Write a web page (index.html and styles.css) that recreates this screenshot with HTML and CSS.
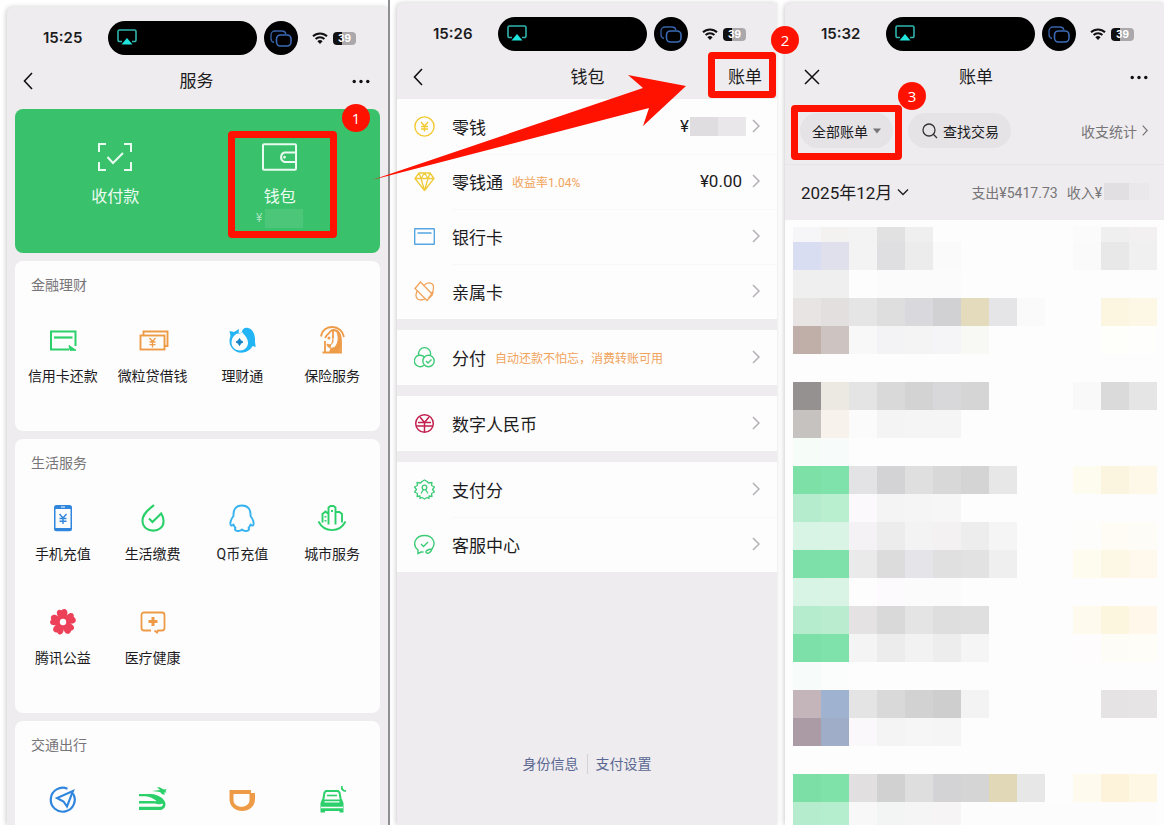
FILE: index.html
```html
<!DOCTYPE html>
<html lang="zh-CN">
<head>
<meta charset="utf-8">
<meta name="viewport" content="width=device-width, initial-scale=1">
<title>微信账单查看步骤</title>
<link rel="stylesheet" href="styles.css">
</head>
<body>
<svg class="defs" aria-hidden="true">
  <symbol id="airplay" viewBox="0 0 20 17"><path d="M5 12.500H2.500a1.500 1.500 0 0 1-1.500-1.500V2.500A1.500 1.500 0 0 1 2.500 1h15A1.500 1.500 0 0 1 19 2.500V11a1.500 1.500 0 0 1-1.500 1.500H15" fill="none" stroke="#2fb5ac" stroke-width="1.600"/><path d="M10 9l5.500 6.500h-11z" fill="#1fe5dc"/></symbol>
  <symbol id="screens" viewBox="0 0 22 17"><path d="M4 12.500C2 12 1 10.500 1 8.500V5a4 4 0 0 1 4-4h7c2 0 3.500 1 4 3" fill="none" stroke="#3663a8" stroke-width="1.300"/><rect x="6.500" y="5" width="14.500" height="11" rx="4" fill="none" stroke="#3b6cb8" stroke-width="1.600"/></symbol>
  <symbol id="wifi" viewBox="0 0 16 12"><path d="M1 4.300a10 10 0 0 1 14 0M3.600 7a6.300 6.300 0 0 1 8.800 0" fill="none" stroke="#111" stroke-width="2"/><path d="M8 12L5.400 9.200a3.700 3.700 0 0 1 5.200 0z" fill="#111"/></symbol>
  <symbol id="back" viewBox="0 0 10 18"><path d="M9 1L1.500 9 9 17" fill="none" stroke="#111" stroke-width="1.600"/></symbol>
  <symbol id="more" viewBox="0 0 18 5"><g fill="#111"><circle cx="2.200" cy="2.500" r="1.700"/><circle cx="9" cy="2.500" r="1.700"/><circle cx="15.800" cy="2.500" r="1.700"/></g></symbol>
  <symbol id="next" viewBox="0 0 8 14"><path d="M1 1l6 6-6 6" fill="none" stroke="#b2b0b3" stroke-width="1.500"/></symbol>
</svg>

<main class="board">
  <section class="shot shot-services">
    <div class="phone">
      <header class="status">
        <time>15:25</time>
        <span class="island"><svg width="20" height="17"><use href="#airplay"/></svg></span>
        <span class="bubble"><svg width="22" height="17"><use href="#screens"/></svg></span>
        <svg class="wifi" width="16" height="12"><use href="#wifi"/></svg>
        <span class="battery">39</span>
      </header>
      <nav class="nav nav-tall">
        <button aria-label="返回"><svg width="10" height="18"><use href="#back"/></svg></button>
        <h1>服务</h1>
        <button aria-label="更多"><svg width="18" height="5"><use href="#more"/></svg></button>
      </nav>

      <div class="stack">
        <div class="pay">
          <button>
            <svg width="36" height="28" viewBox="0 0 36 28" fill="none" stroke="#e9fbf0" stroke-width="2"><path d="M2 9V1h7M27 1h7v8M34 19v8h-7M9 27H2v-8"/><path d="M10.500 14l5.500 6 10-10"/></svg>
            <span>收付款</span>
          </button>
          <button>
            <svg width="36" height="28" viewBox="0 0 36 28" fill="none" stroke="#e9fbf0" stroke-width="2"><rect x="1" y="1.200" width="33" height="25.600" rx="1"/><path d="M34 9.500H22.500a5 5 0 0 0 0 9.500H34"/><circle cx="22.500" cy="14.200" r="1" fill="#e9fbf0" stroke-width="1"/></svg>
            <span>钱包</span>
            <small>¥<i></i></small>
          </button>
        </div>

        <section class="card">
          <h2>金融理财</h2>
          <div class="tiles">
            <button><svg viewBox="0 0 32 32" fill="none" stroke="#2bd06a" stroke-width="2"><path d="M22 25.500H4V7.500h24.500V22"/><path d="M7 13.500h18.500" stroke-width="2.200"/><path d="M22 21.500l7 4.800H23z" fill="#2bd06a" stroke-width="1"/></svg>信用卡还款</button>
            <button><svg viewBox="0 0 32 32" fill="none" stroke="#ee9b48" stroke-width="1.900"><rect x="3.500" y="11.500" width="24" height="14"/><path d="M6.500 11V7.500h24v14.500H28"/><path d="M12.500 14l3 3.500 3-3.500M15.500 17.500v6M12.500 18h6M12.500 20.700h6" stroke-width="1.300"/></svg>微粒贷借钱</button>
            <button><svg viewBox="0 0 32 32"><path d="M16 8c0-3 3-5 6-4 5 1 7 7 7 11v3l.7 5-3-1C22 30 11 31 6 24 3 20 3 16 4.500 12L3.500 7l4.500 1L13 5l-.5 5z" fill="#22b4f4"/><path d="M11 9.500c1.500 1 4 0 5-1.500 2 3 6 5.500 6 11 0 4-3.500 7.500-8 7.500S5.500 23 5.500 18.500c0-4 2-7 5.500-9z" fill="#fefdfe"/><path d="M13.500 14.500l1.300 2.200 2.200 1.300-2.200 1.300-1.300 2.200-1.300-2.200L10 18l2.200-1.300z" fill="#1683c5" stroke="#1683c5"/></svg>理财通</button>
            <button><svg viewBox="0 0 32 32" fill="none" stroke="#ee9b48" stroke-width="1.800"><path d="M5 12.500C6 6 11 3 16.500 3S27 7 28 13"/><path d="M9 14l2-3c3-2 3-5 6-5v8"/><path d="M17 6c6 0 8 6 8 12v10.500H6.500M9 28V17"/><path d="M17 13v4c0 3-3 5-6 3 0 5 8 6 10 0 2-5 1-9 0-12 5 4 4 14 2 20h-9v-2" fill="#ee9b48" stroke-width="1"/><circle cx="13" cy="14" r=".6"/></svg>保险服务</button>
          </div>
        </section>

        <section class="card">
          <h2>生活服务</h2>
          <div class="tiles">
            <button><svg viewBox="0 0 32 32" fill="none" stroke="#2f86dc"><path d="M7 5.500A2.500 2.500 0 0 1 9.500 3h13A2.500 2.500 0 0 1 25 5.500v21.300a2.500 2.500 0 0 1-2.500 2.500h-13A2.500 2.500 0 0 1 7 26.800z" fill="#2f86dc" stroke="none"/><path d="M8.500 7h15v19h-15z" fill="#fefdfe" stroke="none"/><path d="M14 5h4" stroke="#fff"/><path d="M12.500 12l3.500 4 3.500-4M16 16v6M12.500 16.500h7M12.500 19.300h7" stroke-width="1.400"/></svg>手机充值</button>
            <button><svg viewBox="0 0 32 32" fill="none" stroke="#2bd06a" stroke-width="2.100"><path d="M17 3C12 7 5.500 12 5.500 18.500c0 14 22 13 21 0 0-3-1-5-2.300-7L15.500 20 12 16.500"/></svg>生活缴费</button>
            <button><svg viewBox="0 0 32 32" fill="none" stroke="#36b3ee" stroke-width="1.900" stroke-linejoin="round"><path d="M16 3.500c-6.500 0-9 4.500-8.500 10.500C5 17 3.500 21.500 5 23.500c1 .5 2-.5 2.500-1 .5 1.500 1 2.500 2 3.500-2.500 3 4 4 6.500 1.500 2.500 2.500 9 1.500 6.500-1.500 1-1 1.500-2 2-3.500.5.500 1.500 1.500 2.500 1 1.500-2 0-6.500-2.500-9.500.5-6-2-10.500-8.500-10.500z"/></svg>Q币充值</button>
            <button><svg viewBox="0 0 32 32" fill="none" stroke="#2bd06a" stroke-width="1.900"><path d="M2.500 19.500c6 11.500 21 11.500 27 0"/><path d="M6.500 20.500v-8.500l3-2.500 3 2.500v10.500M12.500 21V5.500L14.500 4h3l2 1.500V22.500M19.500 10h4l2.500 2v8.500"/><path d="M9.500 14v1.500M9.500 18v1.500M16 8v2"/></svg>城市服务</button>
            <button><svg viewBox="0 0 32 32" fill="#ed4159"><path id="petal" d="M13.500 16L10.500 9.500C8.500 5 11.500 2.500 14.500 4.200 17 2 20.500 3 20.500 7l-2 9z"/><use href="#petal" transform="rotate(72 16 16)"/><use href="#petal" transform="rotate(144 16 16)"/><use href="#petal" transform="rotate(216 16 16)"/><use href="#petal" transform="rotate(288 16 16)"/><circle cx="16" cy="16" r="3.200" fill="#fefdfe"/></svg>腾讯公益</button>
            <button><svg viewBox="0 0 32 32" fill="none" stroke="#ee9b48" stroke-width="1.800"><path d="M14 24.500H7A2.500 2.500 0 0 1 4.500 22V9A2.500 2.500 0 0 1 7 6.500h18A2.500 2.500 0 0 1 27.500 9v13a2.500 2.500 0 0 1-2.500 2.500h-4l-1 2-2.500-2"/><path d="M16 11v9M11.500 15.500h9" stroke-width="3"/></svg>医疗健康</button>
          </div>
        </section>

        <section class="card">
          <h2>交通出行</h2>
          <div class="tiles">
            <button aria-label="出行服务"><svg viewBox="0 0 32 32" fill="none" stroke="#2f86dc" stroke-width="2.200"><path d="M20.500 4.700A12 12 0 1 0 26 9.500"/><path d="M26 7L10 14l6.500 3.500 3.500 5z" stroke-width="2.100"/></svg></button>
            <button aria-label="火车票机票"><svg viewBox="0 0 32 32" fill="#2bd06a"><path d="M2 10h12c7 .5 14.500 5 14.500 10 0 4-3 6-6 6H2v-3.200h21c2.500 0 3.500-1.800 2.500-3.300C24 21 20 20 17.500 19.500H2V17h13c1 0 3 .5 4.500 0-3-2.500-7-4.500-11-4.700H2zM15 7l8-1-3-2.800h2.500L27 5.500l2.500-.5-1 2 1 1.500h-2.500l1 2h-2.500L23 8z"/></svg></button>
            <button aria-label="打车"><svg viewBox="0 0 32 32"><path d="M3.500 6h21.500v3h4v6c0 16-25.500 16-25.500 0zM7.500 10v6c0 9 16 9 16 0v-6z" fill="#ee9b48" fill-rule="evenodd"/></svg></button>
            <button aria-label="酒店民宿"><svg viewBox="0 0 32 32" fill="none" stroke="#2bd06a" stroke-width="2"><path d="M7 17l1.500-8.500L10 7h12l1.500 1.500L25 17"/><path d="M11 11.500h10" stroke-width="1.600"/><path d="M6 15.500h20l1.500 3.500v9.500h-4V27H9v1.500H4.500V19z" fill="#2bd06a" stroke="none"/><path d="M8.500 17.800h15M5 23.500h22" stroke="#fefdfe" stroke-width="1.300"/><path d="M26 2c-2 3 1 6 4 5-3-1-4-2-4-5z" fill="#2bd06a" stroke-width="1"/></svg></button>
          </div>
        </section>
      </div>
    </div>
    <span class="ring ring-wallet"></span>
    <b class="step step-1">1</b>
  </section>

  <section class="shot shot-wallet">
    <div class="phone">
      <header class="status">
        <time>15:26</time>
        <span class="island"><svg width="20" height="17"><use href="#airplay"/></svg></span>
        <span class="bubble"><svg width="22" height="17"><use href="#screens"/></svg></span>
        <svg class="wifi" width="16" height="12"><use href="#wifi"/></svg>
        <span class="battery">39</span>
      </header>
      <nav class="nav">
        <button aria-label="返回"><svg width="10" height="18"><use href="#back"/></svg></button>
        <h1>钱包</h1>
        <button class="bill">账单</button>
      </nav>

      <div class="groups">
        <ul class="group">
          <li><a href="#"><svg class="glyph" viewBox="0 0 21 21" fill="none" stroke="#f2c930" stroke-width="1.400"><circle cx="10.500" cy="10.500" r="9.600"/><path d="M7 6l3.500 4L14 6M10.500 10v5.500M7 10.500h7M7 13h7"/></svg><span>零钱</span><strong>¥<i></i></strong><svg width="8" height="14"><use href="#next"/></svg></a></li>
          <li><a href="#"><svg class="glyph" viewBox="0 0 21 21" fill="none" stroke="#efcb3a" stroke-width="1.300" stroke-linejoin="round"><path d="M5 2h11l4 5.500L10.500 19.500 1 7.500zM1 7.500h19M5 2l2 5.500 3.500 12 3.500-12L16 2M7 7.500L10.500 2 14 7.500"/></svg><span>零钱通</span><em>收益率1.04%</em><strong>¥0.00</strong><svg width="8" height="14"><use href="#next"/></svg></a></li>
          <li><a href="#"><svg class="glyph" viewBox="0 0 21 21" fill="none" stroke="#55a5e2" stroke-width="1.400"><rect x=".7" y="2.700" width="19.600" height="15.600" rx=".5"/><path d="M3.500 7h14"/></svg><span>银行卡</span><svg width="8" height="14"><use href="#next"/></svg></a></li>
          <li><a href="#"><svg class="glyph" viewBox="0 0 21 21" fill="none" stroke="#f0a35a" stroke-width="1.300"><path d="M6.500 1L1 7.500 13 19.500l5.500-6zM10 4.500C14 0 20 2 19.500 7c0 3-1 4-2 5M3 10c-2 5-1 9 4 9 2 0 3-.5 4.500-1.500M19.500 11l-5 6"/></svg><span>亲属卡</span><svg width="8" height="14"><use href="#next"/></svg></a></li>
        </ul>
        <ul class="group">
          <li><a href="#"><svg class="glyph" viewBox="0 0 21 21" fill="none" stroke="#3ecb78" stroke-width="1.400"><path d="M4.800 8.300a6 6 0 1 1 11.600-.2"/><path d="M10 18.300A5.800 5.800 0 1 1 4.800 8.300C8 8 10 9.500 10.500 11"/><circle cx="14.500" cy="14" r="5.700"/><path d="M12 14l2 2 3.500-3.500"/></svg><span>分付</span><em>自动还款不怕忘，消费转账可用</em><svg width="8" height="14"><use href="#next"/></svg></a></li>
        </ul>
        <ul class="group">
          <li><a href="#"><svg class="glyph" viewBox="0 0 21 21" fill="none" stroke="#c2204e" stroke-width="1.500"><circle cx="10.500" cy="10.500" r="8.800"/><path d="M6 4l4.500 5.500L15 4M10.500 9.500v9.500M4 9.500h13M2.500 13h16"/></svg><span>数字人民币</span><svg width="8" height="14"><use href="#next"/></svg></a></li>
        </ul>
        <ul class="group">
          <li><a href="#"><svg class="glyph" viewBox="0 0 21 21" fill="none" stroke="#3ecb78" stroke-width="1.300" stroke-linejoin="round"><path d="M6 19.500V17l-3 .5.500-3-3-1.500 2-2.500-2-2.500 3-1.500L3 3.500l3.500.5L8 2.500l2.500-1.500L13 2.500 14.500 4l3.500-.5-.5 3 3 1.500-2 2.500 2 2.500-3 1.500.5 3-3-.5v2.500l-2-1-2.500 1.500L8 18.500z"/><circle cx="10.500" cy="8.500" r="2.300"/><path d="M7 14.500l2.500-4M14 14.500l-2.500-4"/></svg><span>支付分</span><svg width="8" height="14"><use href="#next"/></svg></a></li>
          <li><a href="#"><svg class="glyph" viewBox="0 0 21 21" fill="none" stroke="#3ecb78" stroke-width="1.400"><path d="M9.500 18H7l-3 1.500V16C-3 10 2 1.500 10.500 1.500S22.500 9 18 15c-1 3.500-5 5.500-6 3.500s4-3.500 6-3.500"/><path d="M7 10l2.500 2.500L14 8"/></svg><span>客服中心</span><svg width="8" height="14"><use href="#next"/></svg></a></li>
        </ul>
      </div>
      <footer class="links"><a href="#">身份信息</a><a href="#">支付设置</a></footer>
    </div>
    <svg class="arrow" width="316" height="108" viewBox="0 0 316 108"><path d="M0 105L271 13 256 0l58 11-43 40 6-18z" fill="#ff1200"/></svg>
    <span class="ring ring-bill"></span>
    <b class="step step-2">2</b>
  </section>

  <section class="shot shot-bills">
    <div class="phone">
      <header class="status">
        <time>15:32</time>
        <span class="island"><svg width="20" height="17"><use href="#airplay"/></svg></span>
        <span class="bubble"><svg width="22" height="17"><use href="#screens"/></svg></span>
        <svg class="wifi" width="16" height="12"><use href="#wifi"/></svg>
        <span class="battery">39</span>
      </header>
      <nav class="nav nav-close">
        <button aria-label="关闭"><svg width="16" height="16" viewBox="0 0 16 16"><path d="M1 1l14 14M15 1L1 15" stroke="#111" stroke-width="1.500"/></svg></button>
        <h1>账单</h1>
        <button aria-label="更多"><svg width="18" height="5"><use href="#more"/></svg></button>
      </nav>
      <div class="filters">
        <button class="chip">全部账单<svg width="8" height="6" viewBox="0 0 8 6"><path d="M0 .5h8L4 5.500z" fill="#777578"/></svg></button>
        <button class="chip chip-search"><svg width="16" height="16" viewBox="0 0 16 16" fill="none" stroke="#333" stroke-width="1.300"><circle cx="7" cy="7" r="6"/><path d="M11.300 11.300L15 15"/></svg>查找交易</button>
        <a class="stats" href="#">收支统计<svg width="6" height="11" viewBox="0 0 6 11"><path d="M.7.700l4.500 4.800L.7 10.300" fill="none" stroke="#777578" stroke-width="1.200"/></svg></a>
      </div>
      <div class="month">
        <button>2025年12月<svg width="12" height="8" viewBox="0 0 12 8"><path d="M1 1.500l5 5 5-5" fill="none" stroke="#222" stroke-width="1.400"/></svg></button>
        <p><span>支出¥5417.73</span><span>收入¥<i></i></span></p>
      </div>
      <div class="mosaic" id="mosaic"></div>
    </div>
    <span class="ring ring-filter"></span>
    <b class="step step-3">3</b>
  </section>
</main>
<script src="mosaic.js"></script>
</body>
</html>
```

FILE: styles.css
```css
* {
  box-sizing: border-box;
}

body {
  margin: 0;
  background: #fff;
  color: #1c1b1d;
  font-family: Roboto, "Noto Sans CJK SC", sans-serif;
  font-size: 14px;
}

button {
  padding: 0;
  border: 0;
  background: none;
  color: inherit;
  font: inherit;
  cursor: pointer;
}

a {
  color: inherit;
  text-decoration: none;
}

svg {
  display: block;
  flex: none;
}

h1, h2, p, ul {
  margin: 0;
  padding: 0;
  font-weight: 400;
  list-style: none;
}

i {
  display: block;
}

.defs {
  position: absolute;
  width: 0;
  height: 0;
}

.board {
  display: grid;
  grid-template-columns: 388fr 389fr 387fr;
  grid-template-rows: 100%;
  height: 100vh;
  overflow: hidden;
}

.shot {
  position: relative;
  display: flex;
  min-width: 0;
}

.shot-services {
  padding: 7px 0 0 7px;
}

.shot-wallet {
  z-index: 1;
  padding: 3px 0 0 7px;
  border-left: 2px solid #8f8e90;
}

.shot-bills {
  padding: 3px 0 0 8px;
}

.phone {
  display: flex;
  flex: 1;
  flex-direction: column;
  min-width: 0;
  overflow: hidden;
  border-radius: 6px 0 0 0;
  background: #eeecee;
  box-shadow: -1px 0 5px #00000033;
}

/* status bar */
.status {
  display: flex;
  align-items: center;
  padding: 14px 0 0 36px;
}

.status time {
  width: 65px;
  font: 600 15px/20px Inter, sans-serif;
}

.island {
  width: 149px;
  height: 34px;
  padding: 8px 9px;
  border-radius: 17px;
  background: #000;
}

.bubble {
  display: grid;
  place-items: center;
  width: 34px;
  height: 34px;
  margin-left: 7px;
  border-radius: 50%;
  background: #000;
}

.wifi {
  margin-left: 14px;
}

.battery {
  width: 23px;
  margin-left: 5px;
  border-radius: 4px;
  background: linear-gradient(90deg, #111 40%, #aaa8ab 40%);
  color: #fff;
  font: 700 10px/13px Inter, sans-serif;
  text-align: center;
}

/* title bar */
.nav {
  display: grid;
  grid-template-columns: 1fr auto 1fr;
  align-items: center;
  flex: none;
  height: 48px;
  padding: 4px 15px 0 16px;
}

.nav-tall {
  height: 54px;
  padding: 0 18px 2px 16px;
}

.nav-close {
  padding: 4px 16px 0 19px;
}

.nav h1 {
  font-size: 17px;
  line-height: 24px;
}

.nav button:last-child {
  justify-self: end;
}

.nav .bill {
  font-size: 17px;
  line-height: 24px;
}

/* services */
.stack {
  display: flex;
  flex-direction: column;
  gap: 8px;
  padding: 0 8px;
}

.pay {
  display: grid;
  grid-template-columns: 1fr 1fr;
  flex: none;
  align-items: start;
  padding: 34px 18px 25px;
  border-radius: 8px;
  background: #3ac16c;
  color: #edfcf2;
}

.pay button {
  display: flex;
  flex-direction: column;
  align-items: center;
  font-size: 16px;
  line-height: 24px;
}

.pay span {
  margin-top: 14px;
}

.pay small {
  display: flex;
  align-items: center;
  align-self: stretch;
  justify-content: center;
  gap: 3px;
  color: #a5e2bc;
  font-size: 12px;
  line-height: 19px;
}

.pay i {
  width: 38px;
  height: 19px;
  background: #4cc77a;
}

.card {
  padding: 14px 3px 45px;
  border-radius: 8px;
  background: #fefdfe;
}

.card h2 {
  padding: 0 13px;
  color: #777578;
  font-size: 14px;
  line-height: 20px;
}

.tiles {
  display: grid;
  grid-template-columns: repeat(4, 1fr);
  gap: 42px 0;
  margin-top: 29px;
}

.tiles button {
  display: flex;
  flex-direction: column;
  align-items: center;
  gap: 10px;
  line-height: 20px;
  white-space: nowrap;
}

.tiles svg {
  width: 32px;
  height: 32px;
}

/* wallet */
.groups {
  display: flex;
  flex-direction: column;
  gap: 11px;
}

.group {
  background: #fefdfe;
}

.group a {
  display: flex;
  align-items: center;
  height: 55px;
  padding: 0 17px 1px;
  font-size: 17px;
}

.group li + li {
  background: linear-gradient(#f9f8f9, #f9f8f9) 55px 0 / 100% 1px no-repeat;
}

.glyph {
  width: 21px;
  height: 21px;
  margin-right: 17px;
}

.group em {
  margin-left: 9px;
  color: #f0a35a;
  font-size: 12px;
  font-style: normal;
}

.group a > svg:last-child {
  margin-left: auto;
}

.group strong {
  display: flex;
  align-items: center;
  gap: 1px;
  margin-left: auto;
  font-weight: 400;
}

.group strong + svg:last-child {
  margin-left: 10px;
}

.group strong i {
  width: 56px;
  height: 19px;
  margin-right: -4px;
  background: linear-gradient(90deg, #dfdde0 50%, #e9e7ea 50%);
}

.links {
  display: flex;
  justify-content: center;
  margin-top: auto;
  padding-bottom: 51px;
  color: #5a6793;
  line-height: 20px;
}

.links a {
  padding: 0 8px;
}

.links a + a {
  border-left: 1px solid #d4d2d6;
}

/* bills */
.filters {
  display: flex;
  align-items: center;
  flex: none;
  gap: 15px;
  padding: 14px 16px 16px 15px;
}

.chip {
  display: flex;
  align-items: center;
  gap: 5px;
  height: 35px;
  padding: 0 12px;
  border-radius: 18px;
  background: #e5e3e6;
  white-space: nowrap;
}

.chip-search {
  padding: 0 12px 0 14px;
}

.stats {
  display: flex;
  align-items: center;
  gap: 5px;
  margin-left: auto;
  color: #777578;
}

.month {
  display: flex;
  align-items: center;
  justify-content: space-between;
  flex: none;
  height: 56px;
  padding: 0 15px 2px 16px;
  border-top: 1px solid #e6e4e7;
}

.month button {
  display: flex;
  align-items: center;
  gap: 5px;
  font-size: 17px;
}

.month p {
  display: flex;
  gap: 9px;
  color: #777578;
}

.month span {
  display: flex;
  align-items: center;
}

.month i {
  width: 45px;
  height: 17px;
  margin-left: 2px;
  background: linear-gradient(90deg, #e1dfe2 55%, #eae8eb 55%);
}

.mosaic {
  display: grid;
  grid-template-columns: repeat(13, 1fr);
  grid-auto-rows: 28px;
  grid-template-rows: 15px;
  flex: 1;
  padding: 7px 7px 0 8px;
  background: #fefdfe;
}

/* annotations */
.ring {
  position: absolute;
  border: 7px solid #ff1200;
  border-radius: 4px;
}

.ring-wallet {
  top: 131px;
  right: 51px;
  width: 109px;
  height: 107px;
}

.ring-bill {
  top: 52px;
  right: 1px;
  width: 68px;
  height: 46px;
}

.ring-filter {
  top: 105px;
  left: 14px;
  width: 111px;
  height: 55px;
}

.step {
  position: absolute;
  width: 28px;
  height: 28px;
  border-radius: 50%;
  background: #ff1200;
  color: #fff;
  font: 400 15px/28px "Open Sans", sans-serif;
  text-align: center;
}

.step-1 {
  top: 104px;
  right: 18px;
}

.step-2 {
  top: 26px;
  right: -22px;
}

.step-3 {
  top: 82px;
  left: 121px;
}

.arrow {
  position: absolute;
  top: 75px;
  left: -18px;
}
```

FILE: mosaic.js
```js
// Each row lists the colours of its 13 cells; "." leaves a cell blank.
const rows = [
  "f6f5f8 f4f1f1 f4f3f4 e2e1e2 f0eff0 . . . . . fcfbfc f0eff0 f2f0f1",
  "d9ddf1 dfe0eb f4f3f4 dfdee1 edeced fbfafb . . . . fbfafb e9e8e9 f1f0f1",
  "f0eff0 f0eff0 . fcfbfc fcfbfc fcfbfc . . . . . . .",
  "e8e4e3 e3dfde e6e5e6 dfdede d9d8dc d1d0d3 e4dbbd e5e4e7 fbfafb . . fcf6e0 fdf7e6",
  "c0aea8 cdc4c1 f9f8f9 f3f2f4 f4f4f5 f5f4f6 f8f8f4 . . . . fefefa fefefc",
  ". . . . . . . . . . . . .",
  "959190 ece9e3 e5e4e5 dad9da d4d3d4 d8d7da d6d5d6 . . . faf9fa dbdadb e6e5e5",
  "c6c2bf f7f2eb fcfbfc f5f4f5 f6f5f6 f6f5f6 . . . . . . .",
  "f6fcf8 f7fcfb . . . . . . . . . . .",
  "7ce0a7 7fe2aa e3e2e4 d3d2d5 e0dfe0 d9d8d9 d5d4d5 e8e7e7 . . fefbef fbf5df fef8e8",
  "b6ecce b9eecf fbf9fb f5f4f5 f6f5f6 f7f6f7 . . . . . . .",
  "d8f4e4 d9f4e5 f4f2f4 edeced f4f3f4 f3f1f2 eeedee f6f5f6 . . fdfdfc fefcf5 fefcf7",
  "7de0a8 7fe1aa ebeaeb dddcdd e5e4e8 e1e0e1 e3e2e3 f0eff0 . . fefbef fdf7e5 fff8ed",
  "d8f4e4 d9f4e5 . fcfafc fcfbfc fcfbfc . . . . . . .",
  "b6ecce baedcf e4e2e3 dad9da e5e4e5 dfdedf e0dfe0 . . . fefaed fcf6df fff8ea",
  "7de0a8 7fe2ab f5f4f5 edeced f3f2f3 eeedee f6f5f6 . . . fefcfc fefcf6 fefdf7",
  "f7fcfb fafdfc . . . . . . . . . . .",
  "c3b5b9 9fb2d0 e5e4e5 dad9da d3d2d3 cfcecf f4f3f4 . . . . e5e3e4 e6e4e5",
  "ab9ba5 a0adc9 faf8fa f5f4f5 f7f6f7 f6f5f6 . . . . . . .",
  ". . . . . . . . . . . . .",
  "7ce0a6 7fe2a9 e1dfe0 d2d1d2 dfdedf d3d2d5 d6d5d6 e0d8b7 e8e7e8 . fefaee fdf3db fdf7e4",
  "b4eccd b5edcf f8f8f8 f3f4f4 f4f5f4 f6f4f5 fcfcfc fcfcfc fcfcfc fcfcfc fcfcfc fcfcfc fcfcfc"
];

const mosaic = document.getElementById("mosaic");
for (const row of rows) {
  for (const color of row.split(" ")) {
    const cell = document.createElement("span");
    if (color !== ".") cell.style.backgroundColor = "#" + color;
    mosaic.append(cell);
  }
}
```
